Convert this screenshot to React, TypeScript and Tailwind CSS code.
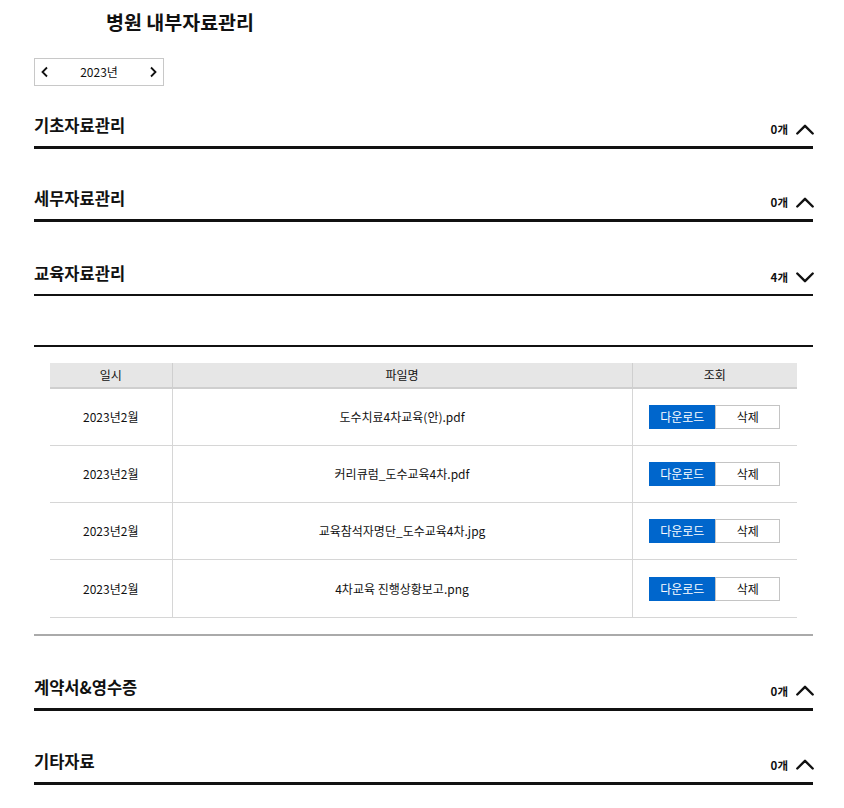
import React from "react";

const FONT = { fontFamily: '"Noto Sans CJK KR", "Noto Sans", sans-serif' };

function ChevronUp() {
  return (
    <svg width="18" height="11" viewBox="0 0 18 11" fill="none">
      <path d="M1.3 9.5 L9 1.8 L16.7 9.5" stroke="#111" strokeWidth="2.4" strokeLinecap="round" strokeLinejoin="round" />
    </svg>
  );
}
function ChevronDown() {
  return (
    <svg width="18" height="11" viewBox="0 0 18 11" fill="none">
      <path d="M1.3 1.5 L9 9.2 L16.7 1.5" stroke="#111" strokeWidth="2.4" strokeLinecap="round" strokeLinejoin="round" />
    </svg>
  );
}

function SectionHeader({ title, count, open, pt, thin }: { title: string; count: number; open?: boolean; pt: string; thin?: boolean }) {
  return (
    <div
      className={`flex items-end justify-between ${thin ? "border-b-2" : "border-b-[3px]"} border-[#111] pb-[9px] ${pt}`}
    >
      <div className="text-[16.5px] font-bold leading-[24px] text-[#111]">{title}</div>
      <div className="flex items-center gap-[8px]">
        <span className="text-[11.5px] font-bold leading-[16px] text-[#111]">{count}개</span>
        <span className="-mr-[1px]">{open ? <ChevronDown /> : <ChevronUp />}</span>
      </div>
    </div>
  );
}

const rows = [
  { date: "2023년2월", name: "도수치료4차교육(안).pdf" },
  { date: "2023년2월", name: "커리큐럼_도수교육4차.pdf" },
  { date: "2023년2월", name: "교육참석자명단_도수교육4차.jpg" },
  { date: "2023년2월", name: "4차교육 진행상황보고.png" },
];

export default function App() {
  return (
    <div className="w-[844px] min-h-[808px] bg-white text-[#111]" style={FONT}>
      <div className="pl-[106px] pt-[8px]">
        <h1 className="text-[19.5px] font-bold leading-[28px] text-[#111]">병원 내부자료관리</h1>
      </div>
      <div className="pl-[34px]">
        <div className="w-[779px]">
          <div className="mt-[22px] flex h-[28px] w-[130px] items-center justify-between border border-[#c8c8c8] px-[5px]">
            <svg width="10" height="12" viewBox="0 0 10 12" fill="none">
              <path d="M7 1.5 L2.5 6 L7 10.5" stroke="#111" strokeWidth="1.8" />
            </svg>
            <span className="text-[12px] leading-[16px]">2023년</span>
            <svg width="10" height="12" viewBox="0 0 10 12" fill="none">
              <path d="M3 1.5 L7.5 6 L3 10.5" stroke="#111" strokeWidth="1.8" />
            </svg>
          </div>

          <SectionHeader title="기초자료관리" count={0} pt="pt-[27px]" />
          <SectionHeader title="세무자료관리" count={0} pt="pt-[37px]" />
          <SectionHeader title="교육자료관리" count={4} open thin pt="pt-[39px]" />

          <div className="mt-[49px] border-t-2 border-b-2 border-t-[#111] border-b-[#aaa] px-[16px] py-[16px]">
            <table className="w-full border-collapse text-[12px] text-[#111]">
              <thead>
                <tr className="h-[25px] bg-[#e6e6e6]">
                  <th className="w-[122px] border-b-2 border-[#cfcfcf] font-normal">일시</th>
                  <th className="border-b-2 border-l border-[#cfcfcf] font-normal">파일명</th>
                  <th className="w-[165px] border-b-2 border-l border-[#cfcfcf] font-normal">조회</th>
                </tr>
              </thead>
              <tbody>
                {rows.map((r, i) => (
                  <tr key={i} className="h-[57.3px] border-b border-[#d6d6d6]">
                    <td className="text-center">{r.date}</td>
                    <td className="border-l border-[#d6d6d6] text-center">{r.name}</td>
                    <td className="border-l border-[#d6d6d6]">
                      <div className="flex justify-center">
                        <button className="h-[24px] w-[66px] bg-[#0066cc] text-[12px] text-white">다운로드</button>
                        <button className="h-[24px] w-[65px] border border-[#c4c4c4] bg-white text-[12px] text-[#111]">삭제</button>
                      </div>
                    </td>
                  </tr>
                ))}
              </tbody>
            </table>
          </div>

          <SectionHeader title="계약서&영수증" count={0} pt="pt-[39px]" />
          <SectionHeader title="기타자료" count={0} pt="pt-[38px]" />
        </div>
      </div>
    </div>
  );
}
